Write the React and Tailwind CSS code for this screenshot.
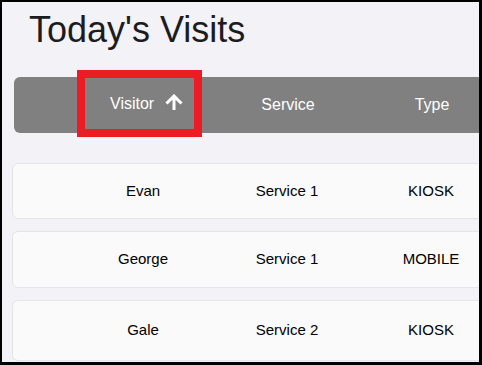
import React from "react";

const visits = [
  { name: "Evan", service: "Service 1", type: "KIOSK", h: "h-[56px]" },
  { name: "George", service: "Service 1", type: "MOBILE", h: "h-[57px]" },
  { name: "Gale", service: "Service 2", type: "KIOSK", h: "h-[61px]" },
];

const ArrowUp = () => (
  <svg width="18" height="16" viewBox="0 0 18 16" fill="none">
    <path
      d="M9 16V2.5M1.5 9.5L9 2l7.5 7.5"
      stroke="white"
      strokeWidth="3"
      strokeLinejoin="miter"
    />
  </svg>
);

const App = () => {
  return (
    <div
      className="w-[482px] h-[365px] overflow-hidden border-black border-l-2 border-t-2 border-r-[3px] border-b-[3px] bg-[#f2f2f7]"
      style={{ fontFamily: '"Liberation Sans", Arial, sans-serif' }}
    >
      {/* Title */}
      <h1 className="pl-[27px] pt-[10px] text-[36px] leading-[36px] text-[#1c1c1e] whitespace-nowrap">
        Today's Visits
      </h1>

      {/* Header bar */}
      <div className="mt-[29px] ml-[12px] w-[600px] h-[56px] flex items-center bg-[#808080] rounded-l-md text-white text-[16px] whitespace-nowrap">
        <div className="ml-[63px] -mt-[3px] w-[125px] h-[67px] shrink-0 border-[8px] border-[#ec1c24] flex items-center pl-[25px]">
          <span>Visitor</span>
          <span className="ml-[11px] mb-[3px]">
            <ArrowUp />
          </span>
        </div>
        <div className="ml-[14px] w-[144px] text-center">Service</div>
        <div className="w-[144px] text-center">Type</div>
      </div>

      {/* Rows */}
      <div className="mt-[30px] flex flex-col gap-[12px]">
        {visits.map((v) => (
          <div
            key={v.name}
            className={`ml-[10px] w-[600px] ${v.h} flex items-center pl-[58px] bg-[#fafafa] border border-[#e4e4ea] rounded-md text-[15px] text-black whitespace-nowrap`}
          >
            <div className="w-[144px] text-center">{v.name}</div>
            <div className="w-[144px] text-center">{v.service}</div>
            <div className="w-[144px] text-center">{v.type}</div>
          </div>
        ))}
      </div>
    </div>
  );
};

export default App;
